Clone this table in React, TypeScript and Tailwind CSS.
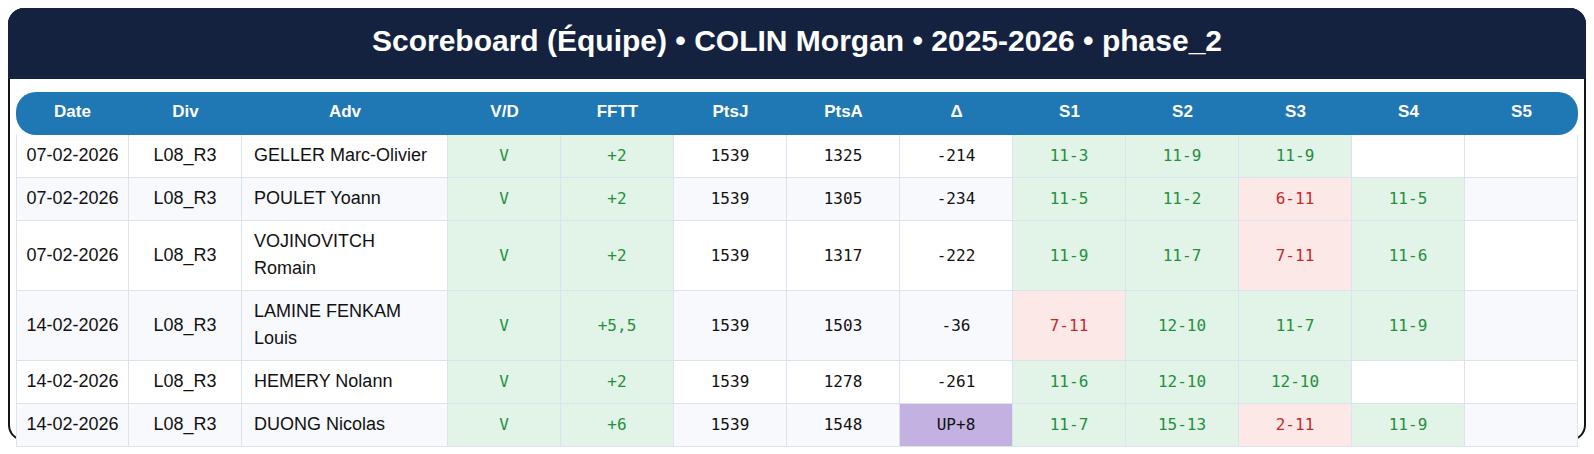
import React from 'react';

// ── Types ──────────────────────────────────────────────────────────────────

type SetScore = { v: string; win: boolean } | null;

interface Match {
  date: string;
  div: string;
  adv: string;
  vd: string;
  fftt: string;
  ptsJ: string;
  ptsA: string;
  delta: string;
  up?: boolean;
  sets: SetScore[];
}

// ── Data ───────────────────────────────────────────────────────────────────

const W = (v: string): SetScore => ({ v, win: true });
const L = (v: string): SetScore => ({ v, win: false });

const MATCHES: Match[] = [
  { date: '07-02-2026', div: 'L08_R3', adv: 'GELLER Marc-Olivier', vd: 'V', fftt: '+2', ptsJ: '1539', ptsA: '1325', delta: '-214', sets: [W('11-3'), W('11-9'), W('11-9'), null, null] },
  { date: '07-02-2026', div: 'L08_R3', adv: 'POULET Yoann', vd: 'V', fftt: '+2', ptsJ: '1539', ptsA: '1305', delta: '-234', sets: [W('11-5'), W('11-2'), L('6-11'), W('11-5'), null] },
  { date: '07-02-2026', div: 'L08_R3', adv: 'VOJINOVITCH Romain', vd: 'V', fftt: '+2', ptsJ: '1539', ptsA: '1317', delta: '-222', sets: [W('11-9'), W('11-7'), L('7-11'), W('11-6'), null] },
  { date: '14-02-2026', div: 'L08_R3', adv: 'LAMINE FENKAM Louis', vd: 'V', fftt: '+5,5', ptsJ: '1539', ptsA: '1503', delta: '-36', sets: [L('7-11'), W('12-10'), W('11-7'), W('11-9'), null] },
  { date: '14-02-2026', div: 'L08_R3', adv: 'HEMERY Nolann', vd: 'V', fftt: '+2', ptsJ: '1539', ptsA: '1278', delta: '-261', sets: [W('11-6'), W('12-10'), W('12-10'), null, null] },
  { date: '14-02-2026', div: 'L08_R3', adv: 'DUONG Nicolas', vd: 'V', fftt: '+6', ptsJ: '1539', ptsA: '1548', delta: 'UP+8', up: true, sets: [W('11-7'), W('15-13'), L('2-11'), W('11-9'), null] },
];

const HEADERS = ['Date', 'Div', 'Adv', 'V/D', 'FFTT', 'PtsJ', 'PtsA', 'Δ', 'S1', 'S2', 'S3', 'S4', 'S5'];

const SANS = "font-['Liberation_Sans',Arial,sans-serif]";
const MONO = "font-['DejaVu_Sans_Mono',monospace]";

// ── Component ──────────────────────────────────────────────────────────────

export default function App() {
  const cell = 'border-r border-b border-[#dde3ee] pt-[7px] pb-[8px] text-center leading-[27px] align-middle';

  return (
    <div className="min-h-[454px] w-[1594px] bg-white px-2 pt-2">
      <div className="h-[433px] rounded-2xl border-2 border-[#141414] bg-white">
        {/* Title bar */}
        <div className="-mx-[2px] -mt-[2px] flex h-[71px] items-center justify-center rounded-t-2xl bg-[#15223f] pb-[5px]">
          <h1 className={`${SANS} text-[30px] leading-none font-bold text-white`}>
            Scoreboard (Équipe) • COLIN Morgan • 2025-2026 • phase_2
          </h1>
        </div>

        {/* Table */}
        <div className="pl-[6px] pt-[13px]">
          <table className="w-[1562px] table-fixed border-separate border-spacing-0">
            <colgroup>
              <col className="w-[113px]" />
              <col className="w-[113px]" />
              <col className="w-[206px]" />
              {Array.from({ length: 10 }).map((_, i) => (
                <col key={i} className="w-[113px]" />
              ))}
            </colgroup>
            <thead>
              <tr>
                {HEADERS.map((h, i) => (
                  <th
                    key={h}
                    className={`h-[43px] bg-[#1f77b4] p-0 pb-[3px] text-center text-[17px] font-bold text-white ${SANS} ${
                      i === 0 ? 'rounded-l-[20px]' : ''
                    } ${i === HEADERS.length - 1 ? 'rounded-r-[20px]' : ''}`}
                  >
                    {h}
                  </th>
                ))}
              </tr>
            </thead>
            <tbody>
              {MATCHES.map((m, r) => {
                const base = r % 2 === 1 ? 'bg-[#f7f9fd]' : 'bg-white';
                return (
                  <tr key={r}>
                    <td className={`${cell} ${base} ${SANS} border-l text-[18px] text-[#111]`}>{m.date}</td>
                    <td className={`${cell} ${base} ${SANS} text-[18px] text-[#111]`}>{m.div}</td>
                    <td className={`${cell} ${base} ${SANS} px-[12px] text-left text-[18px] text-[#111]`}>{m.adv}</td>
                    <td className={`${cell} ${MONO} bg-[#e2f3e7] text-[16px] text-[#23913c]`}>{m.vd}</td>
                    <td className={`${cell} ${MONO} bg-[#e2f3e7] text-[16px] text-[#23913c]`}>{m.fftt}</td>
                    <td className={`${cell} ${base} ${MONO} text-[16px] text-[#111]`}>{m.ptsJ}</td>
                    <td className={`${cell} ${base} ${MONO} text-[16px] text-[#111]`}>{m.ptsA}</td>
                    <td className={`${cell} ${MONO} text-[16px] text-[#111] ${m.up ? 'bg-[#c3b1e1]' : base}`}>{m.delta}</td>
                    {m.sets.map((s, i) => (
                      <td
                        key={i}
                        className={`${cell} ${MONO} text-[16px] ${
                          s === null
                            ? base
                            : s.win
                              ? 'bg-[#e2f3e7] text-[#23913c]'
                              : 'bg-[#fde8e8] text-[#c62828]'
                        }`}
                      >
                        {s?.v}
                      </td>
                    ))}
                  </tr>
                );
              })}
            </tbody>
          </table>
        </div>
      </div>
    </div>
  );
}
